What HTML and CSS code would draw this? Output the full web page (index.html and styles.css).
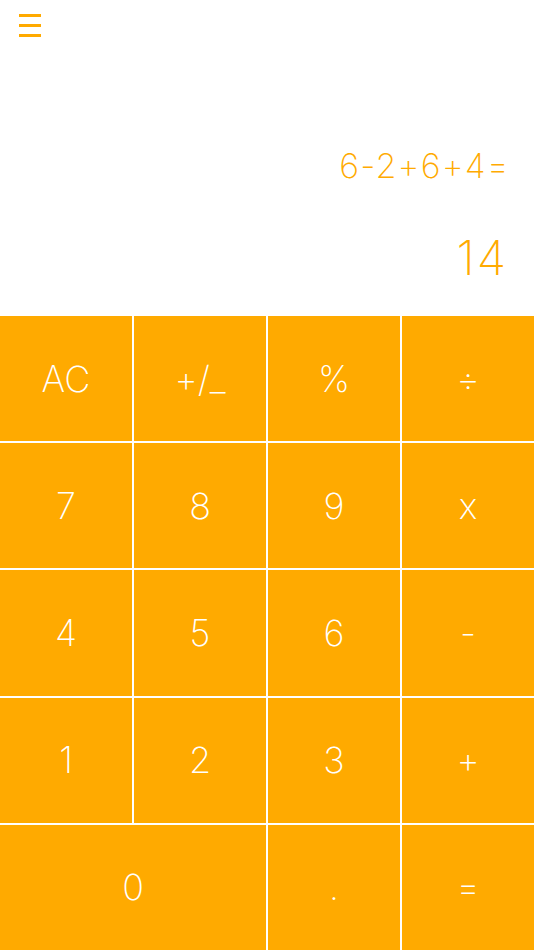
FILE: index.html
```html
<!DOCTYPE html>
<html>
<head>
<meta charset="utf-8">
<link rel="stylesheet" href="styles.css">
</head>
<body>
<div class="app">
  <div class="top">
    <div class="menu"><span></span><span></span><span></span></div>
    <div class="expr">6-2+6+4=</div>
    <div class="result">14</div>
  </div>
  <div class="keys">
    <div class="key">AC</div>
    <div class="key">+/_</div>
    <div class="key">%</div>
    <div class="key">÷</div>
    <div class="key">7</div>
    <div class="key">8</div>
    <div class="key">9</div>
    <div class="key">x</div>
    <div class="key">4</div>
    <div class="key">5</div>
    <div class="key">6</div>
    <div class="key">-</div>
    <div class="key">1</div>
    <div class="key">2</div>
    <div class="key">3</div>
    <div class="key">+</div>
    <div class="key zero">0</div>
    <div class="key">.</div>
    <div class="key">=</div>
  </div>
</div>
</body>
</html>
```
FILE: styles.css
```css
html, body {
  margin: 0;
  padding: 0;
  background: #ffffff;
}
.app {
  width: 534px;
  height: 950px;
  display: flex;
  flex-direction: column;
  font-family: Inter, "Liberation Sans", sans-serif;
  font-weight: 150;
}
.top {
  height: 316px;
  display: flex;
  flex-direction: column;
  color: #ffaa00;
}
.menu {
  display: flex;
  flex-direction: column;
  gap: 7px;
  padding: 14px 0 0 19px;
}
.menu span {
  display: block;
  width: 22px;
  height: 3px;
  background: #ffaa00;
}
.expr {
  margin-top: 109px;
  padding-right: 24px;
  text-align: right;
  font-size: 34px;
  letter-spacing: 1.2px;
  line-height: 40px;
}
.result {
  margin-top: 44px;
  padding-right: 26px;
  text-align: right;
  font-size: 48px;
  letter-spacing: 2px;
  line-height: 56px;
}
.keys {
  height: 634px;
  display: grid;
  grid-template-columns: repeat(4, 1fr);
  grid-template-rows: repeat(5, 1fr);
  gap: 2px;
  background: #ffffff;
}
.key {
  background: #ffaa00;
  color: #ffffff;
  display: flex;
  align-items: center;
  justify-content: center;
  font-size: 36px;
}
.zero {
  grid-column: span 2;
}
```
